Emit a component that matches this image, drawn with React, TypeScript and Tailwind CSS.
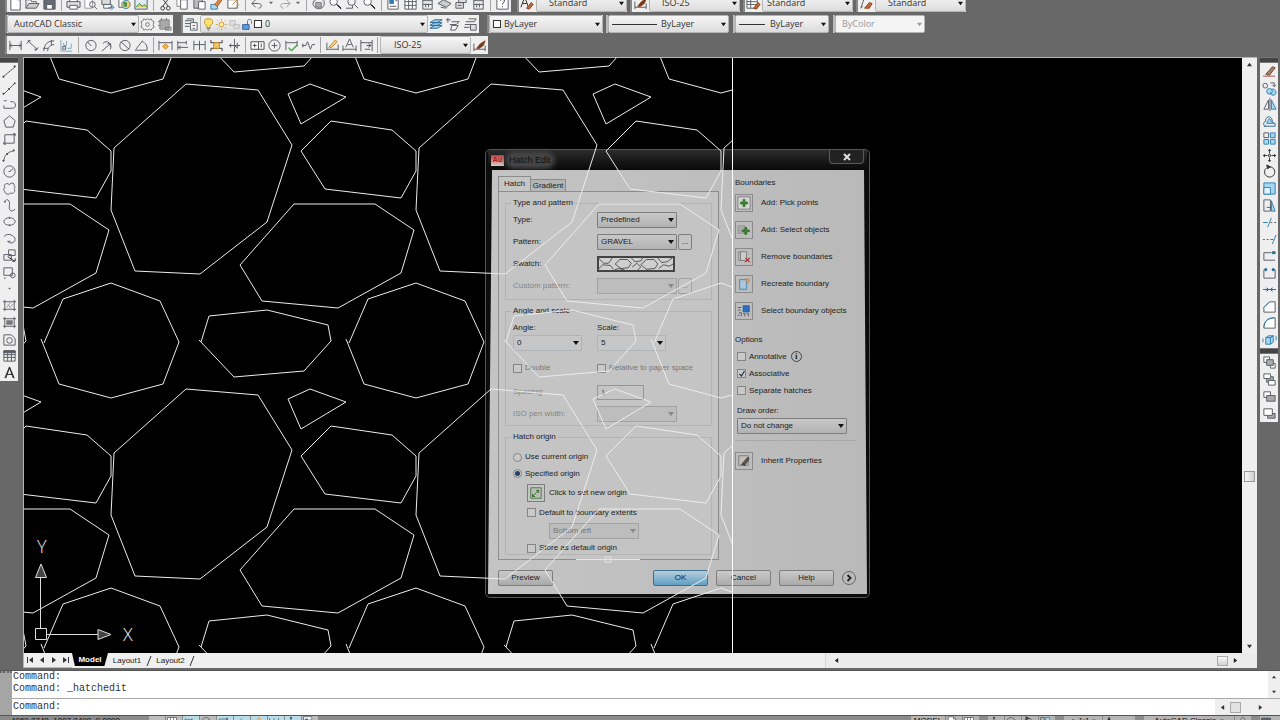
import { ReactNode, useId } from "react";

type Shape = [d: string, stroke?: string, fill?: string];

const K = "#555b63";
const B = "#2f7fb5";
const LB = "#a9d7ee";
const O = "#c8862e";

const icons: Record<string, Shape[]> = {
  new: [["M3 1h7l3 3v11H3z", K, "#fff"], ["M10 1v3h3", K]],
  open: [["M1 13V4h5l1 2h5v2", K, "#eee"], ["M1 13l3-5h11l-3 5z", K, "#ccc"]],
  save: [["M2 2h12v12H2z", K, "#666b73"], ["M5 9h6v5H5z", K, "#fff"]],
  print: [["M4 6V2h8v4", K, "#fff"], ["M1 6h14v6H1z", K, "#ddd"], ["M4 10h8v4H4z", K, "#fff"]],
  preview: [["M2 1h8v12H2z", "#999", "#fff"], ["M7 9a3 3 0 1 0 6 0a3 3 0 1 0-6 0M12 11l3 3", K]],
  publish: [["M2 3h9v6H2z", K, "#ddd"], ["M4 9h8v4H4z", K, "#fff"], ["M9 12h5M12 9l3 3-3 3", B]],
  world: [["M2 2h8v10H2z", K, "#fff"], ["M5 9a4.500 4.500 0 1 0 9 0a4.500 4.500 0 1 0-9 0", "#4a7fa8", "#f1cf6c"], ["M7 7h3v4H8z", "#3c8a4a", "#4f9a5a"]],
  image: [["M1 3h13v11H1z", K, "#dfeaf2"], ["M2 12l4-4 3 3 2-2 3 3", "#3c8a4a", "#e6c35b"]],
  cut: [["M4 2l7 9M12 2L5 11M3 13a2 2 0 1 0 4 0a2 2 0 1 0-4 0M9 13a2 2 0 1 0 4 0a2 2 0 1 0-4 0", "#333"]],
  copy: [["M2 1h7v10H2z", "#888", "#fff"], ["M6 4h7v10H6z", K, "#fff"]],
  paste: [["M2 2h9v11H2z", K, "#bbb"], ["M7 6h7v8H7z", K, "#fff"]],
  match: [["M2 9h7v5H2z", B, LB], ["M6 9l6-7 2 2-5 7z", "#a2541e", "#d98a45"]],
  block: [["M2 4h10v9H2z", K, "#fff"], ["M7 9l6-6M10 13l4-4", O]],
  undo: [["M6 4L2 8l4 4M2 8h7c4 0 4 5 0 5", K]],
  redo: [["M10 4l4 4-4 4M14 8H7c-4 0-4 5 0 5", "#999"]],
  pan: [["M2 9c3 6 9 6 12 1M3 6c3-4 8-4 10-1M2 9l1-4M14 10l0-5", K], ["M5 7h6v5H5z", "#777", "#aaa"]],
  zoom: [["M2 6a4 4 0 1 0 8 0a4 4 0 1 0-8 0", K, "#fff"], ["M9 9l5 5M10 9l4 4", "#222"]],
  zoomw: [["M3 6a4 4 0 1 0 8 0a4 4 0 1 0-8 0M10 9l4 4M1 13h7v-3", K]],
  props: [["M2 1h11v13H2z", K, "#fff"], ["M4 4h4v4H4z", B, B], ["M4 11h7M10 5h2", K]],
  grid: [["M2 2h12v12H2zM2 6h12M2 10h12M6 2v12M10 2v12", K, "#fff"]],
  calc: [["M3 1h10v13H3zM3 5h10M6 8v4M9 8v4M3 9h10", K, "#eee"]],
  sheet: [["M1 8l6-4 8 4-5 4zM4 12l6 1", K, "#ccc"]],
  markup: [["M5 2h8v5H5zM2 7h8v6H2z", K, "#ddd"], ["M4 10h4", "#b33"]],
  help: [["M2 1h12v13H2z", K, "#fff"], ["M6 5c0-3 4-3 4 0c0 2-2 2-2 4M8 11v1", "#222"]],
  textstyle: [["M1 12L5 1l4 11M3 8h4", "#222"], ["M7 13l5-6 2 2-4 5z", "#8a431b", "#b96b3b"]],
  dimstyle: [["M2 6v8M14 8v6M2 12h12", K], ["M5 11l4-5 5-3-2 5-4 3z", "#8a431b", "#6f3a1c"]],
  tablestyle: [["M1 3h11v10H1zM1 6h11M1 9h11M5 3v10", K, "#fff"], ["M8 13l5-6 2 2-4 5z", "#8a431b", "#b96b3b"]],
  leader: [["M2 13L5 4l5-2M2 13l2-2", K], ["M6 13l5-6 3 1-3 5z", "#8a431b", "#b96b3b"]],
  gear: [["M8 2l2 1 2-1 1 2 2 1-1 3 1 3-2 1-1 2-2-1-2 1-2-1-2 1-1-2-2-1 1-3-1-3 2-1 1-2 2 1z", "#777"], ["M6 8a2 2 0 1 0 4 0a2 2 0 1 0-4 0", "#777"]],
  wsave: [["M3 3h10v10H3z", "#888", "#aaa"], ["M1 5h3M1 9h3M5 1v3M10 1v3M12 11h3v3h-6v-3z", "#777"]],
  layers: [["M1 4h8M1 7h6M1 10h5M3 2h7v4", K], ["M7 6h7v8H7zM9 9h3M9 12h3", K, "#fff"]],
  bulb: [["M8 1a4 4 0 0 0-2 8v3h4V9a4 4 0 0 0-2-8z", "#b78b1d", "#ffe36a"], ["M6 13h4M7 15h2", K]],
  sun: [["M5 8a3 3 0 1 0 6 0a3 3 0 1 0-6 0M8 1v2M8 13v2M1 8h2M13 8h2M3 3l1 1M12 12l1 1M13 3l-1 1M4 12l-1 1", O, "#fff0a0"]],
  freeze: [["M2 3h7v6H2zM7 8h7v5H7z", "#bbb", "#ddd"]],
  lock: [["M2 8h8v6H2z", "#235b9b", "#5c9bd5"], ["M8 8V4c0-3 5-3 5 0v3", K]],
  lstack: [["M1 12l5-3h8l-5 3zM1 9l5-3h8l-5 3zM1 6l5-3h8l-5 3z", "#28668f", "#9bd0ee"]],
  lprev: [["M2 1v5M0 3h5M6 5h8l-3 3H4M6 9h7l-3 5H5z", K]],
  lstate: [["M3 5h9M2 8h6M1 11h6M6 2h8l-2 3", K], ["M8 8h6v6H8z", K, "#ddd"]],
  d1: [["M2 3v10M14 3v10M2 8h12M4 6L2 8l2 2M12 6l2 2-2 2", K]],
  d2: [["M3 3l10 9M2 6l3-4M11 14l3-4M3 3l3 0M13 12l-3 0", K]],
  d3: [["M2 14C2 7 6 3 13 3M6 14C6 10 9 7 13 7M10 2v6M1 11h6", K]],
  d4: [["M2 2v12h12M5 5v3h3V3M9 11h4V6", "#7aa6c4"], ["M4 9h3v3H4z", K]],
  d5: [["M3 8a5.500 5.500 0 1 0 11 0a5.500 5.500 0 1 0-11 0M8 8L5 4M8 8h1", K]],
  d6: [["M3 6c4-5 11 0 8 6M2 14l9-8M8 6h3v3", K]],
  d7: [["M3 8a5.500 5.500 0 1 0 11 0a5.500 5.500 0 1 0-11 0M4 4l9 8", K]],
  d8: [["M1 13h13M2 12L9 3l1 2M11 5c3 2 3 5 3 8", K]],
  d9: [["M1 3v10M15 3v10M1 5h14", K], ["M8 6l3 3-3 3-3-3z", O, "#f1b43e"]],
  d10: [["M3 3v10M3 5h9M12 3v4M3 10h11M6 8l-2 2 2 2", K]],
  d11: [["M2 3v10M8 3v10M14 3v10M2 7h12", K]],
  d12: [["M2 2v3h12V2M2 14v-3h12v3", "#333"], ["M5 5h6v6H5z", O, "#f1c566"]],
  d13: [["M9 1v14M3 8h12M12 5v6M5 6v4M9 8l3 3", K]],
  d14: [["M1 4h14v8H1zM9 4v8M12 6v4M3 8h4M5 6v4", "#444", "#fff"]],
  d15: [["M2 8a6 6 0 1 0 12 0a6 6 0 1 0-12 0M8 5v6M5 8h6", K]],
  d16: [["M2 3v10M14 3v6M2 5h12", K], ["M5 10l3 3 6-6M5 11l3 3 6-6", "#24942b"]],
  d17: [["M1 8h4l2-4 3 8 2-5h3M2 6v4", K]],
  d18: [["M2 5v8M14 7v6M2 12h12", K], ["M4 10l7-8 2 2-6 6z", O, "#f4cf8b"]],
  d19: [["M1 8v6M15 8v6M1 12h14M4 10L8 1l4 9M6 7h4", K]],
  d20: [["M2 2v12M14 2v12M2 5h12M8 8h4M6 12h6M10 6l3 2-3 2", K]],
  line: [["M2 13L14 3", K], ["M1 13h1v1H1zM13 2h1v1h-1z", "#333", "#333"]],
  xline: [["M2 14L14 2", K], ["M1 13h1v1H1zM13 2h1v1h-1zM7 8h1v1H7z", "#444", "#444"]],
  pline: [["M2 4h3M2 12h9c5 0 4-7 0-7H9M2 9v3", K]],
  poly: [["M8 2l6 5-2 7H4L2 7z", K]],
  rect: [["M3 4h10v9H3z", K], ["M12 3h2v2M2 12v2h2", "#333"]],
  arc: [["M2 14C2 8 6 4 13 3", K], ["M12 2h1v1h-1zM1 13h1v1H1zM5 6h1v1H5z", "#444", "#444"]],
  circle: [["M2 8a6 6 0 1 0 12 0a6 6 0 1 0-12 0M8 8l4-3M7 8h2", K]],
  cloud: [["M8 4c1-3 6-2 5 1c1 1 1 2 0 3c2 3-1 6-4 5c-2 2-6 1-6-2c-2-1-1-3 0-4c-2-3 2-6 5-3z", K]],
  spline: [["M3 5c0-5 6-4 5 2s1 9 6 5M2 4h2", K]],
  ellipse: [["M2 8a6 4 0 1 0 12 0a6 4 0 1 0-12 0M8 3v2M8 11v2", K]],
  earc: [["M2 6c4-5 12-1 12 3s-6 5-8 2M6 11h3", K]],
  insert: [["M7 2h7v6H7zM2 7h8v6H2z", K], ["M6 9l7 5M11 14h3v-3", "#222"]],
  mkblock: [["M2 3h9v8H2z", K], ["M9 11a2.500 2.500 0 1 0 5 0a2.500 2.500 0 1 0-5 0M2 14h2", K]],
  point: [["M7 8h2M8 7v2", "#666"]],
  hatch: [["M3 2v12M13 2v12M1 4h14M1 12h14", K], ["M5 10l4-5M8 11l4-5M6 7l3 3", "#999"]],
  grad: [["M3 2v12M13 2v12M1 4h14M1 12h14", K], ["M5 6h6v4H5z", "#888", "#777"]],
  region: [["M2 3h8l4 4v7H2z", K], ["M5 9a3 3 0 1 0 6 0a3 3 0 1 0-6 0", K]],
  table: [["M2 3h12v11H2zM2 7h12M2 10h12M6 5v9M10 5v9", K], ["M2 3h12v2H2z", K, K]],
  mtext: [["M3 14L8 2l5 12M5 10h6", "#222"], ["M4 14L8 3l4 11", "#222"]],
  erase: [["M1 13h13", "#a55"], ["M4 11l7-8 3 1-6 8z", "#6b4630", "#a58067"]],
  copyo: [["M1 5a2.500 2.500 0 1 0 5 0a2.500 2.500 0 1 0-5 0M9 2h4v4M11 4l2 2 2-2", K], ["M5 11a3 3 0 1 0 6 0a3 3 0 1 0-6 0M9 12a3 3 0 1 0 5-2a3 3 0 0 0-4-1", B, LB]],
  mirror: [["M7 3v10H2z", K], ["M10 3v10h5z", B, LB], ["M8.500 1v14", K]],
  offset: [["M2 13h12v-3c-2 0-3-1-3-3c-1-6-8-5-7 1c-3 0-3 5 0 5", "#28668f"], ["M5 10h7c-3-1-2-5-4-5s-1 3-3 5z", B, LB]],
  array: [["M2 2h5v5H2z", K], ["M9 2h5v5H9zM2 9h5v5H2zM9 9h5v5H9z", B, LB]],
  move: [["M8 2v4M8 10v4M2 8h4M10 8h4", "#333"], ["M6 3l2-2 2 2zM6 13l2 2 2-2zM3 6L1 8l2 2zM13 6l2 2-2 2z", "none", "#222"], ["M7 7h2v2H7z", "#444", "#fff"]],
  rotate: [["M8 3a5.500 5.500 0 1 1-3 1", "#333"], ["M5 1l4 2-3 2z", "#333", "#333"]],
  scale: [["M2 2h12v12H2z", B, LB], ["M2 7h7v7H2z", B, "#e8f4fb"]],
  stretch: [["M2 2h7v12H2zM5 10h6M9 8l2 2-2 2", K], ["M10 3l4 11h-4z", B, LB]],
  trim: [["M1 8h5M6 13l4-10", B], ["M9 8h2M13 8h2", K]],
  extend: [["M1 8h2M5 8h2M9 8h3", K], ["M11 13l4-10", B]],
  brkpt: [["M2 13V5h8M2 13h12", K], ["M11 4h3v2h-3z", "#28668f", B]],
  brk: [["M2 5v9h12V5", K], ["M3 4h2v2H3zM11 4h2v2h-2z", "#28668f", "#28668f"]],
  join: [["M1 8h14M5 6l2 2-2 2M11 6L9 8l2 2", "#28668f", B]],
  chamfer: [["M2 14V9l6-6h6v11z", K, "#fff"], ["M2 9l6-6", B]],
  fillet: [["M2 14C2 7 6 3 14 3v11z", K, "#fff"], ["M2 13C2 7 6 3 13 3", B]],
  explode: [["M4 6l3-2h5l-3 2v7H4zM4 6h5l3-2v7l-3 2M1 7v4M15 4v5", B, LB]],
  ord1: [["M2 2h6v6H2zM9 9h5v5H9z", K, "#fff"], ["M5 5h7v6H5z", K, "#aaa"]],
  ord2: [["M5 5h7v6H5z", K, "#aaa"], ["M2 2h7v5H2zM7 9h7v5H7z", K, "#fff"]],
  ord3: [["M2 3h7v6H2z", K, "#fff"], ["M5 7h9v6H5z", K, "#aaa"]],
  ord4: [["M6 8h8v5H6z", K, "#aaa"], ["M2 3h9v7H2z", K, "#fff"]],
  addpick: [["M1 1h14v14H1z", "#777", "#d5d5d5"], ["M7 4h2v3h3v2H9v3H7V9H4V7h3z", "#2f6a25", "#3a8a2d"]],
  addsel: [["M1 3h8v9H1z", "#999", "#a8a8a8"], ["M9 5h2v3h3v2h-3v3H9v-3H6V8h3z", "#2f6a25", "#3a8a2d"]],
  remove: [["M2 2h9v10H2zM4 2v10", "#777", "#ccc"], ["M9 9l5 5M14 9l-5 5M10 9l5 5M15 9l-5 5", "#b52f2f"]],
  recreate: [["M3 3h8v11H3z", "#3a82b5", "#a9c6da"], ["M10 4a2 2 0 1 0 4 0a2 2 0 1 0-4 0", "#c37b3c", "#dfa06a"]],
  selobj: [["M7 2h7v7H7z", "#1f5ba8", "#2f6fc0"], ["M1 4h4M1 7h3M2 10h3v4M7 11h2v3M11 11h2v3M1 13h2", "#555"]],
  inherit: [["M2 2h11v11H2z", "#777", "#c9bdb5"], ["M5 12l7-8 2 1-5 8z", "#444", "#555"]],
  origin: [["M2 2h12v12H2z", "#3b7a35", "#bbb"], ["M4 12l7-7M4 12l0-3M4 12h3M11 5H8M11 5v3", "#2b6324"]],
};

function Icon({ name, className = "size-4" }: { name: string; className?: string }) {
  return (
    <svg viewBox="0 0 16 16" className={`${className} shrink-0`} aria-hidden="true">
      {icons[name].map(([d, stroke = K, fill = "none"], i) => (
        <path key={i} d={d} stroke={stroke} fill={fill} strokeWidth="1" />
      ))}
    </svg>
  );
}

function Tri({ dir = "down", className = "size-[6px]" }: { dir?: "down" | "up" | "left" | "right"; className?: string }) {
  const d = { down: "M0 1h6L3 5z", up: "M0 5h6L3 1z", left: "M5 0v6L1 3z", right: "M1 0v6l4-3z" }[dir];
  return (
    <svg viewBox="0 0 6 6" className={`shrink-0 ${className}`} aria-hidden="true">
      <path d={d} fill="currentColor" />
    </svg>
  );
}

function Tool({ name, className = "h-[18px] w-[17px]" }: { name: string; className?: string }) {
  return (
    <button type="button" aria-label={name} className={`flex shrink-0 items-center justify-center ${className}`}>
      <Icon name={name} className="size-[15px]" />
    </button>
  );
}

function Tools({ groups }: { groups: string[][] }) {
  return (
    <>
      {groups.map((g, i) => (
        <div key={i} className="flex shrink-0 items-center">
          {i > 0 && <span className="mx-[3px] h-4 w-px bg-[#a5a5a5]" />}
          {g.map((n, j) =>
            n === "drop" ? (
              <button key={j} type="button" aria-label="History" className="flex w-[10px] justify-center text-[#666]">
                <Tri className="size-1" />
              </button>
            ) : (
              <Tool key={j} name={n} />
            ),
          )}
        </div>
      ))}
    </>
  );
}

function Bar({ children, className = "" }: { children: ReactNode; className?: string }) {
  return (
    <div className={`flex h-[18px] shrink-0 items-center border-l-2 border-[#8a8a8a] bg-[#efefef] ${className}`}>
      {children}
    </div>
  );
}

function BarSelect({
  label,
  value,
  className,
  muted = false,
}: {
  label: string;
  value: string;
  className: string;
  muted?: boolean;
}) {
  return (
    <span className="relative flex shrink-0 items-center">
      <select
        aria-label={label}
        className={`h-[18px] appearance-none rounded-[2px] border border-[#b5b5b5] ${
          muted ? "bg-[#f4f4f4] text-[#999]" : "bg-linear-to-b from-[#f6f6f6] to-[#dcdcdc] text-[#333]"
        } ${className}`}
      >
        <option>{value}</option>
      </select>
      <Tri className={`pointer-events-none absolute right-[3px] size-[5px] ${muted ? "text-[#999]" : "text-[#111]"}`} />
    </span>
  );
}

function LineSelect({ label, width, line, pad }: { label: string; width: string; line: string; pad: string }) {
  return (
    <span className="relative flex shrink-0 items-center border-l-2 border-[#bbb]">
      <BarSelect label={label} value="ByLayer" className={`${width} ${pad}`} />
      <span className={`pointer-events-none absolute left-1 h-px bg-[#333] ${line}`} />
    </span>
  );
}

function HatchLines() {
  const id = useId();
  const tiles: [number, number][] = [];
  for (let x = -305; x <= 610; x += 305) for (let y = -305; y <= 305; y += 305) tiles.push([x, y]);
  return (
    <svg className="pointer-events-none absolute inset-0 size-full" aria-hidden="true">
      <defs>
        <clipPath id={id}>
          <rect x="24" y="58" width="709" height="2000" />
        </clipPath>
      </defs>
      <g transform="translate(-24 -58)" fill="none" stroke="#ececec" strokeWidth="1">
        <g clipPath={`url(#${id})`}>
          {tiles.map(([x, y]) => (
            <g key={`${x},${y}`} transform={`translate(${x} ${y})`}>
              <path d="M114 148L186 84L258 90L292 145L267 222L200 274L135 271L111 210Z" />
              <path d="M44 343L63 299L111 283L160 301L179 342L163 384L111 398L59 384L41 339" />
              <path d="M288 94L310 84L346 97L301 124Z" />
              <path d="M331 121L392 130L416 151V171L401 198L325 189L301 151Z" />
              <path d="M294 204H375L414 230L401 273L338 308L262 301L240 265Z" />
              <path d="M201 342L209 316L267 310L328 325L331 341L304 371L234 377L199 340" />
            </g>
          ))}
        </g>
        <path d="M732.500 58V653" stroke="#fff" />
        <path d="M576 559.500H640" stroke="#e4e4e4" />
        <rect x="605" y="557" width="6" height="5" stroke="#e4e4e4" />
        <g stroke="#ddd">
          <path d="M35.500 628.500h11v11h-11zM40.500 628V578M47 634.500h51" />
          <path d="M35.500 577.500h11L41 564zM98 629.500v10l13-5z" fill="#444" />
        </g>
      </g>
      <g fill="#eee" className="font-['Open_Sans',sans-serif] text-[18px] font-light">
        <text x="13" y="495">Y</text>
        <text x="99" y="583">X</text>
      </g>
    </svg>
  );
}

function DSelect({
  id,
  label,
  value,
  className,
  disabled = false,
  plain = false,
}: {
  id?: string;
  label?: string;
  value: string;
  className: string;
  disabled?: boolean;
  plain?: boolean;
}) {
  return (
    <span className="relative inline-flex items-center align-top">
      <select
        id={id}
        aria-label={label}
        disabled={disabled}
        className={`h-4 appearance-none border px-[3px] ${
          plain ? "border-[#b0b4b8] bg-[#c6c6c6]" : disabled ? "border-[#a2a2a2] bg-[#bdbdbd] text-[#777]" : "rounded-[1px] border-[#7d7d7d] bg-linear-to-b from-[#c8c8c8] to-[#b2b2b2]"
        } ${className}`}
      >
        <option>{value}</option>
      </select>
      <Tri className={`pointer-events-none absolute right-[3px] size-[6px] ${disabled ? "text-[#888]" : "text-[#111]"}`} />
    </span>
  );
}

function Check({
  label,
  checked = false,
  disabled = false,
  type = "checkbox",
  name,
}: {
  label: string;
  checked?: boolean;
  disabled?: boolean;
  type?: "checkbox" | "radio";
  name?: string;
}) {
  return (
    <label className={`flex items-center gap-[3px] whitespace-nowrap ${disabled ? "text-[#777]" : ""}`}>
      <span className="relative flex items-center justify-center">
        <input
          type={type}
          name={name}
          defaultChecked={checked}
          disabled={disabled}
          className={`peer size-[9px] appearance-none border border-[#858585] bg-[#c9c9c9] ${type === "radio" ? "rounded-full" : ""}`}
        />
        {type === "radio" ? (
          <span className="pointer-events-none absolute hidden size-[5px] rounded-full bg-[#1d4468] peer-checked:block" />
        ) : (
          <svg viewBox="0 0 8 8" className="pointer-events-none absolute hidden size-2 peer-checked:block" aria-hidden="true">
            <path d="M1.500 4l2 2 3-5" fill="none" stroke="#26334a" strokeWidth="1.200" />
          </svg>
        )}
      </span>
      {label}
    </label>
  );
}

function Row({ id, label, muted = false, children }: { id: string; label: string; muted?: boolean; children: ReactNode }) {
  return (
    <div className="flex h-[22px] items-center">
      <label htmlFor={id} className={`w-[84px] ${muted ? "text-[#858585]" : ""}`}>
        {label}
      </label>
      {children}
    </div>
  );
}

function Group({ title, children, className }: { title: string; children: ReactNode; className: string }) {
  return (
    <fieldset className={`border border-[#b3b3b3] pl-[7px] ${className}`}>
      <legend className="-ml-[2px] h-3 px-[2px] leading-3">{title}</legend>
      {children}
    </fieldset>
  );
}

function Swatch() {
  return (
    <svg
      id="swatch"
      viewBox="0 0 78 16"
      preserveAspectRatio="none"
      className="h-4 w-[78px] border-2 border-[#444] bg-[#cfcfcf]"
      role="img"
      aria-label="Gravel"
    >
      <path
        d="M0 1l5 6h5l4-7M0 14l4-5 8 1 3 5M17 8l5-6h8l4 5-3 6-8 1zM34 0l4 5 6-1 2-4M35 12l5-5 4 5-3 4M44 9l6-7h8l4 6-3 6-9 1zM62 0l4 6 6-1 5-5M63 14l5-5 6 2 4-3M16 16l5-2 6 2"
        fill="none"
        stroke="#444"
        strokeWidth="1"
      />
    </svg>
  );
}

function PushButton({ children, className = "" }: { children: ReactNode; className?: string }) {
  return (
    <button
      type="button"
      className={`h-4 w-[55px] rounded-[2px] border ${className || "border-[#7d7d7d] bg-linear-to-b from-[#cacaca] to-[#aaa]"}`}
    >
      {children}
    </button>
  );
}

function ActionRow({ icon, label, className = "" }: { icon: string; label: string; className?: string }) {
  return (
    <button type="button" className={`flex h-[27px] items-center gap-2 whitespace-nowrap ${className}`}>
      <span className="flex size-[18px] items-center justify-center border border-[#8a8a8a] bg-[#bdbdbd]">
        <Icon name={icon} className="size-[14px]" />
      </span>
      {label}
    </button>
  );
}

function HatchDialog() {
  return (
    <section
      aria-label="Hatch Edit"
      className="absolute top-[91px] left-[461px] flex h-[449px] w-[385px] flex-col rounded-[5px] border border-[#555] bg-[#0c0c0c] px-[2px] pb-[3px] font-['Liberation_Sans',sans-serif] text-[8px] leading-3 text-[#222]"
    >
      <header className="flex h-5 shrink-0 items-center justify-between bg-linear-to-b from-[#2c2c2c] to-[#090909] px-[3px]">
        <div className="flex items-center gap-1">
          <span className="flex h-[11px] w-[13px] items-center justify-center bg-linear-to-b from-[#b83a40] to-[#d2cccc] text-[7px] font-bold text-[#b01820]">
            Au
          </span>
          <h2 className="rounded-full bg-[#444] px-px text-[9px] text-[#111] shadow-[0_0_5px_3px_#444]">Hatch Edit</h2>
        </div>
        <button type="button" aria-label="Close" className="flex h-[14px] w-[35px] items-center justify-center self-start rounded-b-[4px] border border-t-0 border-[#5a5a5a] bg-[#222]">
          <svg viewBox="0 0 8 8" className="size-2" aria-hidden="true">
            <path d="M1 1l6 6M7 1L1 7" stroke="#ddd" strokeWidth="2" />
          </svg>
        </button>
      </header>
      <div className="flex min-h-0 flex-1 flex-col bg-linear-to-r from-[#c4c4c4] to-[#b9b9b9] pt-[7px] pr-[11px] pl-[10px] [clip-path:polygon(4px_0,calc(100%_-_3px)_0,100%_100%,0_100%)]">
        <div className="flex">
          <div className="w-[221px]">
            <div className="flex h-[14px] items-end" role="tablist">
              <button type="button" role="tab" className="h-[15px] w-[33px] border border-b-0 border-[#8c8c8c] bg-[#c5c5c5]">
                Hatch
              </button>
              <button type="button" role="tab" className="h-3 w-[35px] border border-b-0 border-l-0 border-[#8c8c8c] bg-[#b5b5b5] leading-[10px]">
                Gradient
              </button>
            </div>
            <div className="h-[369px] border border-[#8c8c8c] bg-[#c4c4c4] px-[6px] pt-[5px]">
              <Group title="Type and pattern" className="h-[103px]">
                <Row id="type" label="Type:">
                  <DSelect id="type" value="Predefined" className="w-20" />
                </Row>
                <Row id="pattern" label="Pattern:">
                  <DSelect id="pattern" value="GRAVEL" className="w-20" />
                  <button type="button" className="ml-px h-4 w-[14px] rounded-[2px] border border-[#7d7d7d]">...</button>
                </Row>
                <Row id="swatch" label="Swatch:">
                  <Swatch />
                </Row>
                <Row id="custom" label="Custom pattern:" muted>
                  <DSelect id="custom" value="" disabled className="w-20" />
                  <button type="button" disabled className="ml-px h-4 w-[14px] rounded-[2px] border border-[#a2a2a2] text-[#888]">...</button>
                </Row>
              </Group>
              <Group title="Angle and scale" className="mt-[5px] h-[121px]">
                <div className="flex gap-[15px] pt-[5px]">
                  <div className="flex flex-col gap-px">
                    <label htmlFor="angle">Angle:</label>
                    <DSelect id="angle" value="0" plain className="w-[69px]" />
                  </div>
                  <div className="flex flex-col gap-px">
                    <label htmlFor="scale">Scale:</label>
                    <DSelect id="scale" value="5" plain className="w-[69px] border-[#8fa5ba]" />
                  </div>
                </div>
                <div className="flex h-[30px] items-center pt-1">
                  <div className="w-[84px]">
                    <Check label="Double" disabled />
                  </div>
                  <Check label="Relative to paper space" disabled />
                </div>
                <Row id="spacing" label="Spacing:" muted>
                  <input id="spacing" defaultValue="1" disabled className="h-[15px] w-[47px] border border-[#969696] px-[3px] text-[#555]" />
                </Row>
                <Row id="iso" label="ISO pen width:" muted>
                  <DSelect id="iso" value="" disabled className="w-20" />
                </Row>
              </Group>
              <Group title="Hatch origin" className="mt-[5px] h-[124px]">
                <div className="flex flex-col pt-[6px]">
                  <div className="flex h-4 items-center">
                    <Check type="radio" name="origin" label="Use current origin" />
                  </div>
                  <div className="flex h-[17px] items-center">
                    <Check type="radio" name="origin" label="Specified origin" checked />
                  </div>
                  <div className="flex flex-col items-start pl-[14px]">
                    <button type="button" className="flex h-[22px] items-center gap-1">
                      <span className="flex size-[18px] items-center justify-center border border-[#7d7d7d]">
                        <Icon name="origin" className="size-[14px]" />
                      </span>
                      Click to set new origin
                    </button>
                    <div className="flex h-[17px] items-center">
                      <Check label="Default to boundary extents" />
                    </div>
                    <div className="flex h-5 items-center pl-[22px]">
                      <DSelect label="Extents corner" value="Bottom left" disabled className="w-[90px]" />
                    </div>
                    <div className="flex h-[14px] items-center">
                      <Check label="Store as default origin" />
                    </div>
                  </div>
                </div>
              </Group>
            </div>
          </div>
          <div className="flex flex-1 flex-col items-start pl-4">
            <h3>Boundaries</h3>
            <ActionRow icon="addpick" label="Add: Pick points" />
            <ActionRow icon="addsel" label="Add: Select objects" />
            <ActionRow icon="remove" label="Remove boundaries" />
            <ActionRow icon="recreate" label="Recreate boundary" />
            <ActionRow icon="selobj" label="Select boundary objects" />
            <h3 className="mt-[10px] mb-[2px]">Options</h3>
            <div className="flex h-[17px] items-center gap-1 pl-[2px]">
              <Check label="Annotative" />
              <span className="flex size-[11px] items-center justify-center rounded-full border border-[#444] font-['Liberation_Serif',serif] text-[9px] leading-none font-bold">i</span>
            </div>
            <div className="flex h-[17px] items-center pl-[2px]">
              <Check label="Associative" checked />
            </div>
            <div className="flex h-[17px] items-center pl-[2px]">
              <Check label="Separate hatches" />
            </div>
            <label htmlFor="order" className="mt-[6px] mb-px pl-[2px]">
              Draw order:
            </label>
            <div className="flex w-full border-b border-[#a8a8a8] pb-[6px] pl-[2px]">
              <DSelect id="order" value="Do not change" className="w-[110px]" />
            </div>
            <ActionRow icon="inherit" label="Inherit Properties" className="mt-[6px]" />
          </div>
        </div>
        <footer className="flex items-center pt-[10px]">
          <PushButton>Preview</PushButton>
          <div className="flex flex-1 items-center justify-end gap-2">
            <PushButton className="border-[#3f6f8f] bg-linear-to-b from-[#b5cedd] to-[#5f9fc4]">OK</PushButton>
            <PushButton>Cancel</PushButton>
            <PushButton>Help</PushButton>
            <button type="button" aria-label="More options" className="flex size-[14px] items-center justify-center rounded-full border border-[#666]">
              <svg viewBox="0 0 8 8" className="size-2" aria-hidden="true">
                <path d="M2.500 1l3 3-3 3" fill="none" stroke="#222" strokeWidth="1.800" />
              </svg>
            </button>
          </div>
        </footer>
      </div>
    </section>
  );
}

const drawTools = ["line", "xline", "pline", "poly", "rect", "arc", "circle", "cloud", "spline", "ellipse", "earc", "insert", "mkblock", "point", "hatch", "grad", "region", "table", "mtext"];
const modifyTools = ["erase", "copyo", "mirror", "offset", "array", "move", "rotate", "scale", "stretch", "trim", "extend", "brkpt", "brk", "join", "chamfer", "fillet", "explode"];

function Column({ names, className }: { names: string[]; className: string }) {
  return (
    <div className="w-[18px]">
      <div className="h-[6px] border-y border-[#777] bg-[#444]" />
      <div className={`flex flex-col bg-[#efefef] ${className}`}>
        {names.map((n) => (
          <Tool key={n} name={n} className="min-h-0 w-full flex-1" />
        ))}
      </div>
    </div>
  );
}

function Toolbars() {
  return (
    <div className="flex shrink-0 flex-col gap-[3px] pb-[3px] text-[9px] text-[#333]">
      <div className="flex h-3 items-end overflow-hidden pl-[5px]">
        <Bar>
          <Tools
            groups={[
              ["new", "open", "save"],
              ["print", "preview", "publish", "world", "image"],
              ["cut", "copy", "paste", "match", "block"],
              ["undo", "drop", "redo", "drop"],
              ["pan", "zoom", "zoomw", "zoom"],
              ["props", "grid", "calc", "sheet", "markup", "calc"],
              ["help"],
            ]}
          />
        </Bar>
        <Bar className="ml-[6px]">
          <Tool name="textstyle" />
          <BarSelect label="Text style" value="Standard" className="w-[91px] pl-3" />
        </Bar>
        <Bar className="ml-[3px]">
          <Tool name="dimstyle" />
          <BarSelect label="Dimension style" value="ISO-25" className="w-[91px] pl-3" />
        </Bar>
        <Bar className="ml-[3px]">
          <Tool name="tablestyle" />
          <BarSelect label="Table style" value="Standard" className="w-[91px] pl-1" />
        </Bar>
        <Bar className="ml-[3px]">
          <Tool name="leader" />
          <BarSelect label="Leader style" value="Standard" className="w-[91px] pl-3" />
        </Bar>
      </div>
      <div className="flex pl-[5px]">
        <Bar>
          <BarSelect label="Workspace" value="AutoCAD Classic" className="w-[132px] pl-[6px]" />
          <Tools groups={[["gear", "wsave"]]} />
        </Bar>
        <Bar className="ml-[8px]">
          <Tool name="layers" />
          <span className="relative flex items-center">
            <BarSelect label="Layer" value="0" className="w-[228px] pl-[64px]" />
            <span className="pointer-events-none absolute left-[2px] flex items-center">
              <Icon name="bulb" className="size-[13px]" />
              <Icon name="sun" className="size-[13px]" />
              <Icon name="freeze" className="size-[13px]" />
              <Icon name="lock" className="size-[13px]" />
              <span className="size-2 border border-[#333] bg-white" />
            </span>
          </span>
          <Tools groups={[["lstack", "lprev", "lstate"]]} />
        </Bar>
        <Bar className="ml-[8px]">
          <span className="relative flex items-center">
            <BarSelect label="Colour" value="ByLayer" className="w-[114px] pl-[14px]" />
            <span className="pointer-events-none absolute left-[4px] size-2 border border-[#333] bg-white" />
          </span>
        </Bar>
        <div className="ml-[3px] flex gap-1">
          <LineSelect label="Linetype" width="w-[121px]" pad="pl-[52px]" line="w-[45px]" />
          <LineSelect label="Lineweight" width="w-[94px]" pad="pl-[34px]" line="w-[26px]" />
          <span className="border-l-2 border-[#bbb]">
            <BarSelect label="Plot style" value="ByColor" className="w-[90px] pl-[6px]" muted />
          </span>
        </div>
      </div>
      <div className="flex pl-[5px]">
        <Bar>
          <Tools
            groups={[
              ["d1", "d2", "d3", "d4"],
              ["d5", "d6", "d7", "d8"],
              ["d9", "d10", "d11", "d12", "d13"],
              ["d14", "d15", "d16", "d17"],
              ["d18", "d19", "d20"],
            ]}
          />
          <span className="mx-[2px] h-4 w-px bg-[#a5a5a5]" />
          <BarSelect label="Dimension style" value="ISO-25" className="w-[91px] pl-[13px]" />
          <Tool name="dimstyle" />
        </Bar>
      </div>
    </div>
  );
}

function Slash() {
  return (
    <svg viewBox="0 0 6 12" className="h-3 w-[6px] shrink-0" aria-hidden="true">
      <path d="M1 11L5 1" stroke="#333" />
    </svg>
  );
}

function LayoutBar() {
  return (
    <div className="flex h-[15px] shrink-0 items-center bg-[#efefef] text-[8px] text-[#222]">
      <div className="flex h-full w-[48px] items-center justify-around border-b border-[#bbb] text-[#333]">
        {(["left", "left", "right", "right"] as const).map((dir, i) => (
          <button key={i} type="button" aria-label={`Tab scroll ${i + 1}`} className="flex items-center">
            {i === 0 && <span className="h-[6px] w-px bg-[#333]" />}
            <Tri dir={dir} />
            {i === 3 && <span className="h-[6px] w-px bg-[#333]" />}
          </button>
        ))}
      </div>
      <nav className="flex h-full items-center font-['Liberation_Sans',sans-serif]">
        <button type="button" className="h-[13px] w-[36px] self-start bg-black font-bold text-white [clip-path:polygon(0_0,100%_0,90%_100%,8%_100%)]">
          Model
        </button>
        <button type="button" className="w-[38px]">Layout1</button>
        <Slash />
        <button type="button" className="w-[37px]">Layout2</button>
        <Slash />
      </nav>
      <div className="ml-auto flex h-full w-[35%] items-center border-l border-[#d5d5d5] bg-[#ebebeb] pr-1 pl-2">
        <Tri dir="left" className="size-[5px]" />
        <span className="ml-auto h-[10px] w-[11px] border border-[#aaa] bg-linear-to-b from-[#f8f8f8] to-[#cfcfcf]" />
        <Tri dir="right" className="mr-[15px] ml-[5px] size-[5px]" />
      </div>
    </div>
  );
}

function CommandPanel() {
  return (
    <div className="flex h-[45px] shrink-0 border-t border-[#555] bg-white font-['Liberation_Mono',monospace] text-[10px] leading-3 text-[#333]">
      <div className="w-3 border-t-2 border-dotted border-[#666] bg-[#a5a5a5]" />
      <div className="flex flex-1 flex-col">
        <div className="flex h-[28px] border-b border-[#aaa]">
          <div className="flex-1 pl-px">
            <p>Command:</p>
            <p>Command: _hatchedit</p>
          </div>
          <div className="flex w-3 flex-col items-center justify-between bg-[#efefef] py-1">
            <Tri dir="up" className="size-1" />
            <Tri className="size-1" />
          </div>
        </div>
        <div className="flex flex-1 items-center pl-px">
          <label htmlFor="command">Command:</label>
          <input id="command" className="ml-1 h-3 min-w-0 flex-1 outline-none" />
          <div className="flex h-full w-[65px] items-center bg-[#efefef] pl-[5px]">
            <Tri dir="left" className="size-[5px]" />
            <span className="ml-[5px] h-[11px] w-[11px] border border-[#aaa] bg-[#e2e2e2]" />
            <Tri dir="right" className="ml-[17px] size-[5px]" />
          </div>
        </div>
      </div>
    </div>
  );
}

function StatusBar() {
  return (
    <footer className="flex h-[5px] shrink-0 items-start overflow-hidden border-t border-[#555] bg-[#8b8b8b] font-['Liberation_Sans',sans-serif] text-[8px] leading-[9px] text-[#111]">
      <span className="w-[149px] shrink-0 pl-[11px]">4060.8748, 1007.8499, 0.0000</span>
      <div className="flex gap-px">
        {["point", "grid", "d10", "circle", "rect", "trim", "d18", "d11", "move", "props"].map((n, i) => (
          <button key={n} type="button" aria-label={n} className={`w-4 ${i > 1 && i < 9 && i !== 3 ? "bg-[#b9dce9]" : "bg-[#bdbdbd]"}`}>
            <Icon name={n} className="size-3" />
          </button>
        ))}
      </div>
      <div className="ml-auto flex items-start gap-px">
        <button type="button" className="w-[34px] bg-[#b5b5b5]">MODEL</button>
        <button type="button" aria-label="Layout" className="w-4 bg-[#b5b5b5]"><Icon name="new" className="size-3" /></button>
        <button type="button" aria-label="Views" className="mr-2 w-4 bg-[#b5b5b5]"><Icon name="grid" className="size-3" /></button>
        {["move", "circle", "rotate", "array"].map((n) => (
          <button key={n} type="button" aria-label={n} className="w-4 bg-[#b5b5b5]"><Icon name={n} className="size-3" /></button>
        ))}
        <button type="button" className="ml-2 flex w-[38px] items-center justify-center gap-[2px] bg-[#b5b5b5]">
          <Tri dir="up" />
          1:1
          <Tri className="size-1" />
        </button>
        <button type="button" aria-label="Annotation" className="mr-2 w-8 bg-[#b5b5b5]"><Icon name="mtext" className="size-3" /></button>
        <button type="button" className="flex w-[90px] items-center justify-center gap-1 bg-[#b5b5b5]">
          AutoCAD Classic
          <Tri className="size-1" />
        </button>
        <button type="button" aria-label="Lock" className="mr-2 w-4 bg-[#b5b5b5]"><Icon name="lock" className="size-3" /></button>
        <button type="button" aria-label="Clean screen" className="w-5 bg-[#b5b5b5]"><Icon name="table" className="size-3" /></button>
      </div>
    </footer>
  );
}

export default function App() {
  return (
    <div className="flex h-screen flex-col overflow-hidden bg-[#686868] font-['Open_Sans','Noto_Sans',sans-serif] text-[#222]">
      <Toolbars />
      <div className="flex min-h-0 flex-1 items-start">
        <Column names={drawTools} className="h-[318px]" />
        <main className="ml-[5px] flex h-full min-w-0 flex-1 flex-col border-t border-l border-[#b5b5b5]">
          <div className="flex min-h-0 flex-1">
            <div className="relative flex-1 overflow-hidden bg-black">
              <HatchDialog />
              <HatchLines />
            </div>
            <div className="flex w-[15px] flex-col items-center justify-between bg-[#efefef] py-1 text-[#333]">
              <Tri dir="up" className="size-[5px]" />
              <div className="flex w-full flex-1 flex-col items-center">
                <span className="flex-[400]" />
                <span className="h-[11px] w-[11px] border border-[#999] bg-linear-to-r from-[#f8f8f8] to-[#d0d0d0]" />
                <span className="flex-[160]" />
              </div>
              <Tri className="size-[5px]" />
            </div>
          </div>
          <LayoutBar />
        </main>
        <div className="mr-[2px] ml-[3px]">
          <Column names={modifyTools} className="h-[285px]" />
          <Column names={["ord1", "ord2", "ord3", "ord4"]} className="h-[68px]" />
        </div>
      </div>
      <div className="h-[2px] shrink-0" />
      <CommandPanel />
      <StatusBar />
    </div>
  );
}
